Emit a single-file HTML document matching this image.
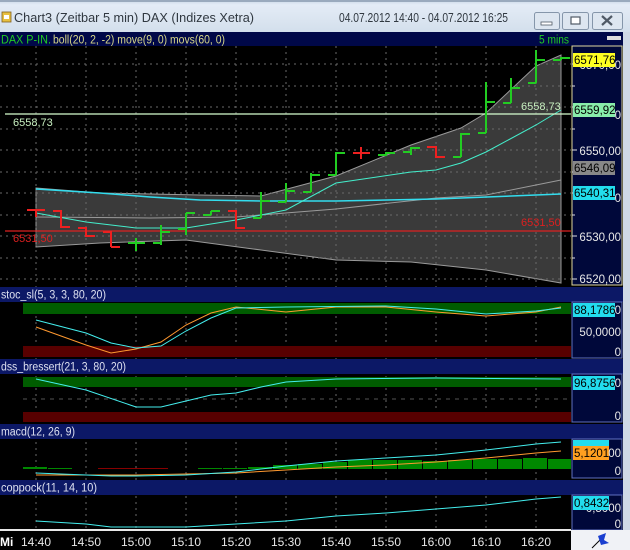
<!DOCTYPE html>
<html><head><meta charset="utf-8"><style>
html,body{margin:0;padding:0;background:#000;width:630px;height:550px;overflow:hidden}
svg{display:block}
text{font-family:"Liberation Sans",sans-serif}
</style></head><body>
<svg width="630" height="550" viewBox="0 0 630 550" xmlns="http://www.w3.org/2000/svg">
<defs>
<linearGradient id="tb" x1="0" y1="0" x2="0" y2="1"><stop offset="0" stop-color="#c9d6e6"/><stop offset="0.15" stop-color="#e4ecf6"/><stop offset="1" stop-color="#d3dfec"/></linearGradient>
</defs>
<rect x="0" y="0" width="630" height="32" fill="url(#tb)"/>
<rect x="0" y="0" width="630" height="2" fill="#9aaabd"/>
<rect x="2" y="12" width="9" height="10" fill="#e8c040" stroke="#806020" stroke-width="0.8"/>
<rect x="4" y="15" width="5" height="4" fill="#fff"/>
<text x="14" y="22" font-size="12.5" fill="#303840" textLength="240" lengthAdjust="spacingAndGlyphs">Chart3 (Zeitbar 5 min)  DAX (Indizes Xetra)</text>
<text x="339" y="22" font-size="12.5" fill="#303840" textLength="169" lengthAdjust="spacingAndGlyphs">04.07.2012 14:40 - 04.07.2012 16:25</text>
<g fill="#dde6f0" stroke="#8596aa" stroke-width="1">
<rect x="534.5" y="12.5" width="25" height="17" rx="2"/><rect x="562.5" y="12.5" width="26" height="17" rx="2"/><rect x="592.5" y="12.5" width="30" height="17" rx="2"/></g>
<rect x="541" y="22" width="11" height="3" fill="#fff" stroke="#505a66" stroke-width="0.8"/>
<rect x="571" y="17" width="9" height="7" fill="#fff" stroke="#505a66" stroke-width="1.2"/>
<path d="M602 16 L612 25 M612 16 L602 25" stroke="#505a66" stroke-width="2.2"/>
<rect x="623" y="32" width="7" height="518" fill="#cfd9e6"/>
<rect x="0" y="32" width="623" height="14" fill="#000848"/>
<text x="1" y="43.5" font-size="11.5" fill="#22cc22" textLength="50" lengthAdjust="spacingAndGlyphs">DAX P-IN.</text>
<text x="53" y="43.5" font-size="11.5" fill="#d8d888" textLength="172" lengthAdjust="spacingAndGlyphs">boll(20, 2, -2) move(9, 0) movs(60, 0)</text>
<text x="539" y="43.5" font-size="11.5" fill="#22cc22" textLength="30" lengthAdjust="spacingAndGlyphs">5 mins</text>
<rect x="607" y="36" width="14" height="4" fill="#ddd"/>
<rect x="0" y="46" width="571" height="239" fill="#000"/>
<path d="M36 188 L100 193 L200 195 L261 196 L336 176 L411 145 L461 128 L486 113 L536 66 L561 55 L561 283 L486 270 L411 262 L336 260 L261 250 L186 240 L100 243 L36 247Z" fill="#3a3a3a" stroke="#9a9a9a" stroke-width="1"/>
<g stroke="#6a6a6a" stroke-width="1" stroke-dasharray="2,4">
<path d="M36 46V530M86 46V530M136 46V530M186 46V530M236 46V530M286 46V530M336 46V530M386 46V530M436 46V530M486 46V530M536 46V530"/>
<path d="M0 64H571M0 86H571M0 107H571M0 129H571M0 150H571M0 172H571M0 193H571M0 215H571M0 236H571M0 258H571M0 279H571"/>
</g>
<path d="M36 217 L150 218 L236 217 L336 209 L436 198 L486 195 L536 185 L561 180" fill="none" stroke="#9a9a9a" stroke-width="1"/>
<path d="M36 189 L100 193 L150 197 L200 200 L261 201 L336 201 L436 199 L536 195 L561 194" fill="none" stroke="#33ddee" stroke-width="1.5"/>
<path d="M36 213 L86 222 L136 228 L186 228 L236 220 L286 210 L336 183 L411 172 L436 170 L461 163 L486 152 L536 125 L561 110" fill="none" stroke="#44eecc" stroke-width="1"/>
<path d="M5 114H571" stroke="#d8ffd0" stroke-width="1.3"/>
<path d="M5 231H571" stroke="#dd2020" stroke-width="1.3"/>
<text x="13" y="126" font-size="11" fill="#c8f0c0">6558,73</text>
<text x="521" y="110" font-size="11" fill="#c8f0c0">6558,73</text>
<text x="13" y="242" font-size="11" fill="#dd2020">6531,50</text>
<text x="521" y="226" font-size="11" fill="#dd2020">6531,50</text>
<g stroke-width="2" fill="none">
<path stroke="#ee2020" d="M27 210H36V217M36 210H45M53 211H61V227H70M78 228H86V237M86 236H95M103 232H111V247M111 247H120M228 211H236V228H245"/>
<path stroke="#ee2020" d="M353 153H370M361 147V159M427 147H436V157H445"/>
<path stroke="#22cc22" d="M128 243H145M136 238V251M153 243H161M161 225V245M161 232H170M178 229H186M186 213V235M186 213H195M203 215H211M211 211V215M211 211H220M253 218H261M261 192V218M261 201H270M278 202H286M286 183V202M286 191H295M303 192H311M311 173V192M311 175H320M328 175H336M336 152V175M336 153H345M378 155H386M386 152V156M386 153H395M403 152H411M411 147V155M411 148H420M453 157H461M461 133V157M461 134H470M478 133H486M486 82V133M486 102H495M503 103H511M511 78V103M511 88H520M528 83H536M536 50V83M536 60H545M553 60H561M561 57V60M561 58H570"/>
</g>
<rect x="572" y="46" width="50" height="239" fill="#00083a" stroke="#e0d8a0" stroke-width="1"/>
<g stroke="#ddd" stroke-width="1"><path d="M572 64h5M572 86h3M572 107h5M572 129h3M572 150h5M572 172h3M572 193h5M572 215h3M572 236h5M572 258h3M572 279h5"/></g>
<g font-size="11.5" fill="#e8e8e8" text-anchor="end">
<text x="621" y="69">6570,00</text><text x="621" y="155">6550,00</text><text x="621" y="241">6530,00</text><text x="621" y="283">6520,00</text>
<text x="621" y="119">0</text><text x="621" y="202">0</text>
</g>
<g font-size="11.5" fill="#000">
<rect x="573" y="53" width="42" height="14" fill="#ffff22"/><text x="574" y="64">6571,76</text>
<rect x="573" y="103" width="42" height="14" fill="#88eeaa"/><text x="574" y="114">6559,92</text>
<rect x="573" y="161" width="42" height="14" fill="#888"/><text x="574" y="172">6546,09</text>
<rect x="573" y="186" width="42" height="14" fill="#22ddee"/><text x="574" y="197">6540,31</text>
</g>
<rect x="0" y="287" width="623" height="15" fill="#0c1866"/>
<text x="1" y="298.5" font-size="11.5" fill="#dde0f0" textLength="105" lengthAdjust="spacingAndGlyphs">stoc_sl(5, 3, 3, 80, 20)</text>
<rect x="23" y="303" width="548" height="11" fill="#005c00"/>
<rect x="23" y="346" width="548" height="11" fill="#580000"/>
<path d="M36 327 L86 345 L111 353 L136 349 L161 342 L186 325 L211 313 L236 307 L286 312 L336 307 L386 307 L436 312 L486 316 L536 312 L561 307" fill="none" stroke="#ff9930" stroke-width="1"/>
<path d="M36 320 L86 333 L111 343 L136 348 L161 346 L186 331 L211 318 L236 308 L286 307 L386 306 L436 309 L486 314 L536 311 L561 308" fill="none" stroke="#44eeee" stroke-width="1"/>
<rect x="572" y="302" width="50" height="56" fill="#00083a" stroke="#6070c0" stroke-width="1"/>
<rect x="573" y="303" width="42" height="14" fill="#22ddee"/><text x="574" y="314" font-size="11.5" fill="#000">88,1786</text>
<g font-size="11.5" fill="#e8e8e8" text-anchor="end"><text x="621" y="314">0</text><text x="621" y="336">50,0000</text><text x="621" y="356">0</text></g>
<rect x="0" y="359" width="623" height="15" fill="#0c1866"/>
<text x="1" y="370.5" font-size="11.5" fill="#dde0f0" textLength="125" lengthAdjust="spacingAndGlyphs">dss_bressert(21, 3, 80, 20)</text>
<rect x="23" y="377" width="548" height="10" fill="#005c00"/>
<rect x="23" y="412" width="548" height="10" fill="#580000"/>
<path d="M23 399H571" stroke="#555" stroke-dasharray="4,5"/>
<path d="M36 379 L86 390 L136 407 L161 407 L186 401 L211 395 L236 393 L261 387 L286 382 L336 379 L436 378 L561 379" fill="none" stroke="#44eeee" stroke-width="1"/>
<rect x="572" y="374" width="50" height="48" fill="#00083a" stroke="#6070c0" stroke-width="1"/>
<rect x="573" y="376" width="42" height="14" fill="#22ddee"/><text x="574" y="387" font-size="11.5" fill="#000">96,8756</text>
<g font-size="11.5" fill="#e8e8e8" text-anchor="end"><text x="621" y="387">0</text><text x="621" y="420">0</text></g>
<rect x="0" y="424" width="623" height="15" fill="#0c1866"/>
<text x="1" y="435.5" font-size="11.5" fill="#dde0f0" textLength="74" lengthAdjust="spacingAndGlyphs">macd(12, 26, 9)</text>
<g fill="#008800">
<rect x="23" y="467" width="24" height="2"/><rect x="48" y="468" width="24" height="1"/><rect x="198" y="468" width="24" height="1"/><rect x="223" y="468" width="24" height="1"/><rect x="248" y="467" width="24" height="2"/><rect x="273" y="465" width="24" height="4"/><rect x="298" y="464" width="24" height="5"/><rect x="323" y="462" width="24" height="7"/><rect x="348" y="460" width="24" height="9"/><rect x="373" y="460" width="24" height="9"/><rect x="398" y="460" width="24" height="9"/><rect x="423" y="461" width="24" height="8"/><rect x="448" y="460" width="24" height="9"/><rect x="473" y="459" width="24" height="10"/><rect x="498" y="459" width="24" height="10"/><rect x="523" y="458" width="24" height="11"/><rect x="548" y="459" width="23" height="10"/>
</g>
<rect x="98" y="468" width="70" height="1" fill="#880000"/>
<path d="M36 475 L136 475 L236 473 L286 470 L336 467 L386 465 L436 462 L486 458 L536 453 L561 451" fill="none" stroke="#ff9930" stroke-width="1"/>
<path d="M36 473 L86 475 L111 476 L136 476 L186 475 L236 472 L286 466 L336 461 L386 458 L436 455 L486 450 L536 444 L561 442" fill="none" stroke="#44eeee" stroke-width="1"/>
<rect x="572" y="439" width="50" height="39" fill="#00083a" stroke="#6070c0" stroke-width="1"/>
<rect x="573" y="440" width="36" height="8" fill="#22ddee"/>
<rect x="573" y="446" width="36" height="14" fill="#ffa020"/><text x="574" y="457" font-size="11.5" fill="#000">5,1201</text>
<g font-size="11.5" fill="#e8e8e8" text-anchor="end"><text x="621" y="457">00</text><text x="621" y="475">0</text></g>
<rect x="0" y="480" width="623" height="15" fill="#0c1866"/>
<text x="1" y="491.5" font-size="11.5" fill="#dde0f0" textLength="96" lengthAdjust="spacingAndGlyphs">coppock(11, 14, 10)</text>
<path d="M36 521 L86 524 L111 527 L136 527 L186 527 L236 524 L286 521 L336 516 L386 513 L436 509 L486 505 L536 499 L561 497" fill="none" stroke="#44eeee" stroke-width="1"/>
<rect x="572" y="495" width="50" height="35" fill="#00083a" stroke="#6070c0" stroke-width="1"/>
<g font-size="11.5" fill="#e8e8e8" text-anchor="end"><text x="621" y="512">0,5000</text><text x="621" y="528">0</text></g>
<rect x="573" y="496" width="36" height="14" fill="#22ddee"/><text x="574" y="507" font-size="11.5" fill="#000">0,8432</text>
<rect x="0" y="529" width="571" height="2" fill="#e8e8e8"/>
<rect x="0" y="531" width="571" height="19" fill="#000"/>
<g font-size="12" fill="#e8e8e8" text-anchor="middle">
<text x="36" y="546">14:40</text><text x="86" y="546">14:50</text><text x="136" y="546">15:00</text><text x="186" y="546">15:10</text><text x="236" y="546">15:20</text><text x="286" y="546">15:30</text><text x="336" y="546">15:40</text><text x="386" y="546">15:50</text><text x="436" y="546">16:00</text><text x="486" y="546">16:10</text><text x="536" y="546">16:20</text>
</g>
<text x="0" y="546" font-size="12" font-weight="bold" fill="#fff">Mi</text>
<rect x="571" y="530" width="59" height="20" fill="#f0f2f6"/>
<path d="M592 548 L601 539" stroke="#000" stroke-width="1"/>
<path d="M598 536 L606 533 L604 540 L609 543 L601 545 Z" fill="#1a3fd0"/>
</svg>
</body></html>
